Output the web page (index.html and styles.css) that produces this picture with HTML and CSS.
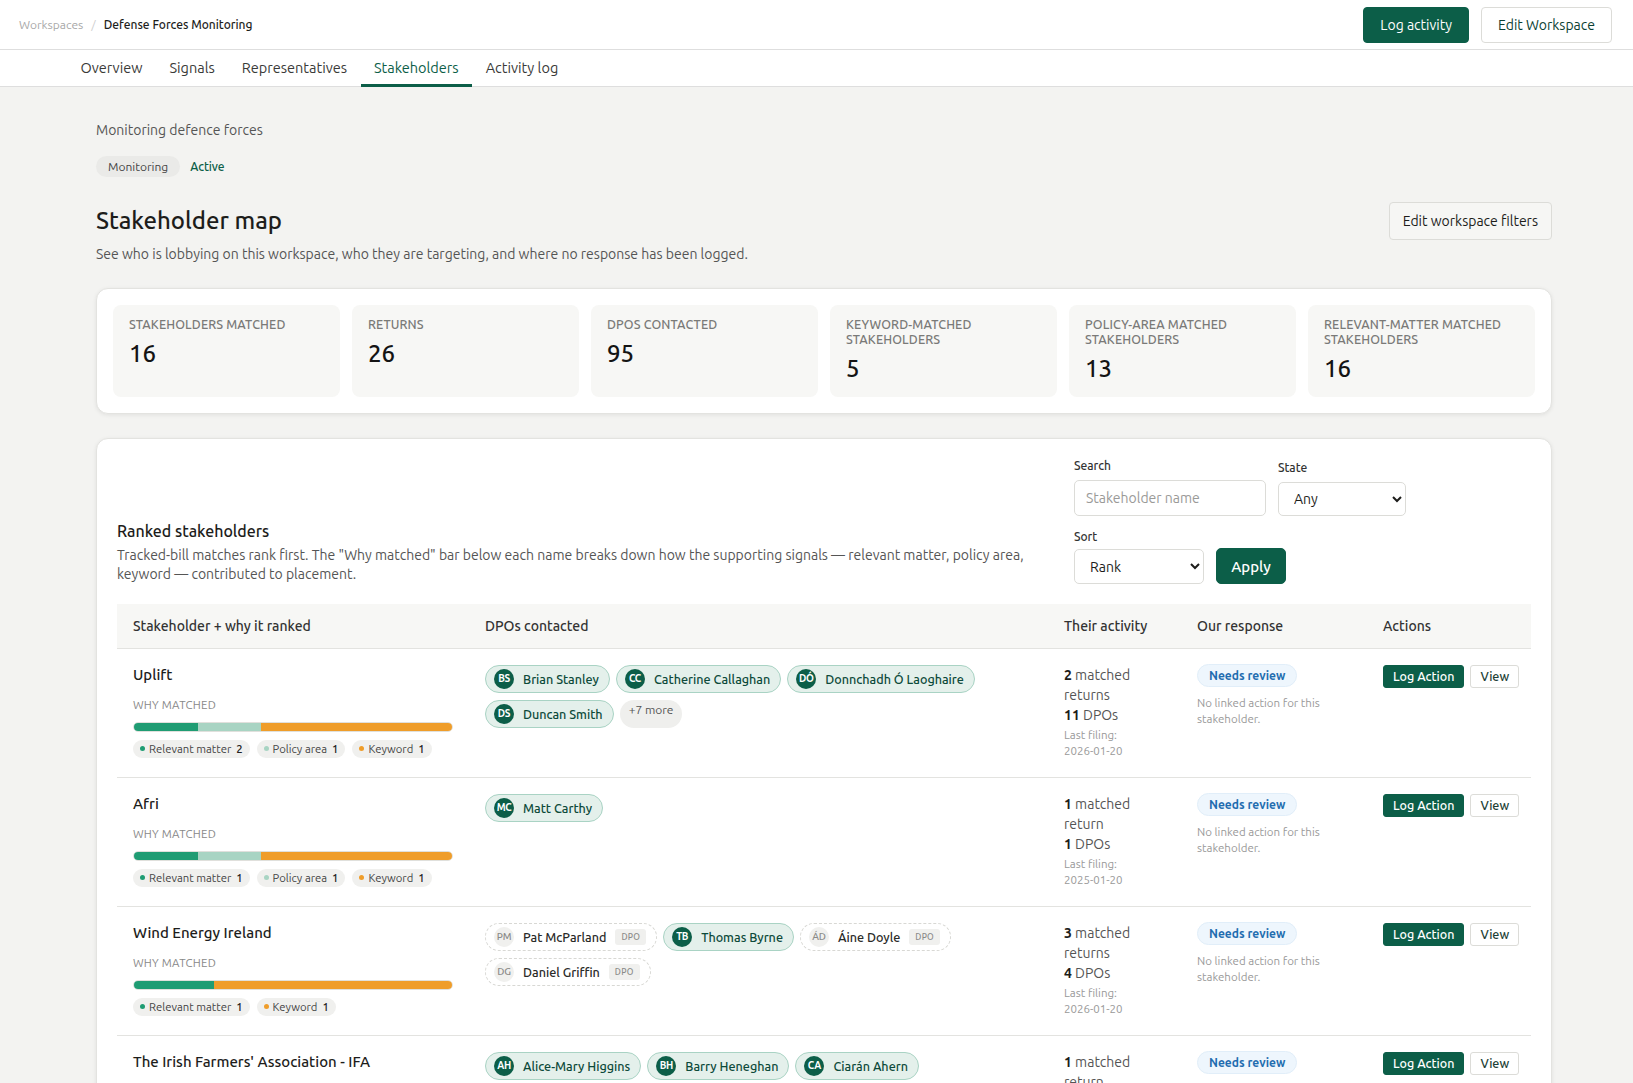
FILE: index.html
```html
<!DOCTYPE html>
<html lang="en">
<head>
    <meta charset="utf-8">
    <title>Defense Forces Monitoring - Stakeholders</title>
    <link rel="stylesheet" href="styles.css">
</head>
<body>
    <header class="topbar">
        <nav class="crumbs">
            <a href="#">Workspaces</a>
            <span class="sep">/</span>
            <span class="current">Defense Forces Monitoring</span>
        </nav>
        <div class="top-actions">
            <button class="btn btn-primary">Log activity</button>
            <button class="btn btn-outline">Edit Workspace</button>
        </div>
    </header>

    <nav class="tabs">
        <a href="#">Overview</a>
        <a href="#">Signals</a>
        <a href="#">Representatives</a>
        <a href="#" class="active">Stakeholders</a>
        <a href="#">Activity log</a>
    </nav>

    <main class="page">
        <p class="ws-desc">Monitoring defence forces</p>
        <div class="ws-tags">
            <span class="tag">Monitoring</span>
            <span class="tag tag-active">Active</span>
        </div>

        <div class="title-row">
            <div>
                <h1>Stakeholder map</h1>
                <p class="lead">See who is lobbying on this workspace, who they are targeting, and where no response has been logged.</p>
            </div>
            <button class="btn btn-light">Edit workspace filters</button>
        </div>

        <section class="card stats">
            <div class="stat"><span class="stat-label">Stakeholders matched</span><span class="stat-value">16</span></div>
            <div class="stat"><span class="stat-label">Returns</span><span class="stat-value">26</span></div>
            <div class="stat"><span class="stat-label">DPOs contacted</span><span class="stat-value">95</span></div>
            <div class="stat"><span class="stat-label">Keyword-matched stakeholders</span><span class="stat-value">5</span></div>
            <div class="stat"><span class="stat-label">Policy-area matched stakeholders</span><span class="stat-value">13</span></div>
            <div class="stat"><span class="stat-label">Relevant-matter matched stakeholders</span><span class="stat-value">16</span></div>
        </section>

        <section class="card ranked">
            <div class="ranked-head">
                <div class="ranked-intro">
                    <h2>Ranked stakeholders</h2>
                    <p>Tracked-bill matches rank first. The "Why matched" bar below each name breaks down how the supporting signals — relevant matter, policy area, keyword — contributed to placement.</p>
                </div>
                <form class="filters">
                    <label class="field field-search">
                        <span>Search</span>
                        <input type="text" placeholder="Stakeholder name">
                    </label>
                    <label class="field field-state">
                        <span>State</span>
                        <select><option>Any</option></select>
                    </label>
                    <label class="field field-sort">
                        <span>Sort</span>
                        <select><option>Rank</option></select>
                    </label>
                    <button type="button" class="btn btn-primary btn-apply">Apply</button>
                </form>
            </div>

            <table class="rank-table">
                <colgroup>
                    <col style="width:352px">
                    <col style="width:579px">
                    <col style="width:133px">
                    <col style="width:186px">
                    <col>
                </colgroup>
                <thead>
                    <tr>
                        <th>Stakeholder + why it ranked</th>
                        <th>DPOs contacted</th>
                        <th>Their activity</th>
                        <th>Our response</th>
                        <th>Actions</th>
                    </tr>
                </thead>
                <tbody>
                    <tr>
                        <td>
                            <div class="sh-name">Uplift</div>
                            <div class="why-label">Why matched</div>
                            <div class="why-bar">
                                <span class="seg seg-rm" style="width:20%"></span>
                                <span class="seg seg-pa" style="width:20%"></span>
                                <span class="seg seg-kw" style="width:60%"></span>
                            </div>
                            <div class="legend">
                                <span class="lg"><i class="dot dot-rm"></i>Relevant matter <b>2</b></span>
                                <span class="lg"><i class="dot dot-pa"></i>Policy area <b>1</b></span>
                                <span class="lg"><i class="dot dot-kw"></i>Keyword <b>1</b></span>
                            </div>
                        </td>
                        <td>
                            <div class="dpos">
                                <span class="dpo"><i class="av">BS</i>Brian Stanley</span>
                                <span class="dpo"><i class="av">CC</i>Catherine Callaghan</span>
                                <span class="dpo"><i class="av">DÓ</i>Donnchadh Ó Laoghaire</span>
                                <span class="dpo"><i class="av">DS</i>Duncan Smith</span>
                                <span class="more">+7 more</span>
                            </div>
                        </td>
                        <td class="activity">
                            <div><b>2</b> matched returns</div>
                            <div><b>11</b> DPOs</div>
                            <div class="last">Last filing: <span>2026-01-20</span></div>
                        </td>
                        <td>
                            <span class="review">Needs review</span>
                            <p class="no-link">No linked action for this stakeholder.</p>
                        </td>
                        <td>
                            <div class="row-actions">
                                <button class="btn btn-primary btn-sm">Log Action</button>
                                <button class="btn btn-outline btn-sm">View</button>
                            </div>
                        </td>
                    </tr>
                    <tr>
                        <td>
                            <div class="sh-name">Afri</div>
                            <div class="why-label">Why matched</div>
                            <div class="why-bar">
                                <span class="seg seg-rm" style="width:20%"></span>
                                <span class="seg seg-pa" style="width:20%"></span>
                                <span class="seg seg-kw" style="width:60%"></span>
                            </div>
                            <div class="legend">
                                <span class="lg"><i class="dot dot-rm"></i>Relevant matter <b>1</b></span>
                                <span class="lg"><i class="dot dot-pa"></i>Policy area <b>1</b></span>
                                <span class="lg"><i class="dot dot-kw"></i>Keyword <b>1</b></span>
                            </div>
                        </td>
                        <td>
                            <div class="dpos">
                                <span class="dpo"><i class="av">MC</i>Matt Carthy</span>
                            </div>
                        </td>
                        <td class="activity">
                            <div><b>1</b> matched return</div>
                            <div><b>1</b> DPOs</div>
                            <div class="last">Last filing: <span>2025-01-20</span></div>
                        </td>
                        <td>
                            <span class="review">Needs review</span>
                            <p class="no-link">No linked action for this stakeholder.</p>
                        </td>
                        <td>
                            <div class="row-actions">
                                <button class="btn btn-primary btn-sm">Log Action</button>
                                <button class="btn btn-outline btn-sm">View</button>
                            </div>
                        </td>
                    </tr>
                    <tr>
                        <td>
                            <div class="sh-name">Wind Energy Ireland</div>
                            <div class="why-label">Why matched</div>
                            <div class="why-bar">
                                <span class="seg seg-rm" style="width:25%"></span>
                                <span class="seg seg-kw" style="width:75%"></span>
                            </div>
                            <div class="legend">
                                <span class="lg"><i class="dot dot-rm"></i>Relevant matter <b>1</b></span>
                                <span class="lg"><i class="dot dot-kw"></i>Keyword <b>1</b></span>
                            </div>
                        </td>
                        <td>
                            <div class="dpos">
                                <span class="dpo dpo-other"><i class="av">PM</i>Pat McParland<em>DPO</em></span>
                                <span class="dpo"><i class="av">TB</i>Thomas Byrne</span>
                                <span class="dpo dpo-other"><i class="av">ÁD</i>Áine Doyle<em>DPO</em></span>
                                <span class="dpo dpo-other"><i class="av">DG</i>Daniel Griffin<em>DPO</em></span>
                            </div>
                        </td>
                        <td class="activity">
                            <div><b>3</b> matched returns</div>
                            <div><b>4</b> DPOs</div>
                            <div class="last">Last filing: <span>2026-01-20</span></div>
                        </td>
                        <td>
                            <span class="review">Needs review</span>
                            <p class="no-link">No linked action for this stakeholder.</p>
                        </td>
                        <td>
                            <div class="row-actions">
                                <button class="btn btn-primary btn-sm">Log Action</button>
                                <button class="btn btn-outline btn-sm">View</button>
                            </div>
                        </td>
                    </tr>
                    <tr>
                        <td>
                            <div class="sh-name">The Irish Farmers' Association - IFA</div>
                            <div class="why-label">Why matched</div>
                            <div class="why-bar">
                                <span class="seg seg-rm" style="width:25%"></span>
                                <span class="seg seg-kw" style="width:75%"></span>
                            </div>
                            <div class="legend">
                                <span class="lg"><i class="dot dot-rm"></i>Relevant matter <b>1</b></span>
                                <span class="lg"><i class="dot dot-kw"></i>Keyword <b>1</b></span>
                            </div>
                        </td>
                        <td>
                            <div class="dpos">
                                <span class="dpo"><i class="av">AH</i>Alice-Mary Higgins</span>
                                <span class="dpo"><i class="av">BH</i>Barry Heneghan</span>
                                <span class="dpo"><i class="av">CA</i>Ciarán Ahern</span>
                            </div>
                        </td>
                        <td class="activity">
                            <div><b>1</b> matched return</div>
                            <div><b>3</b> DPOs</div>
                            <div class="last">Last filing: <span>2026-01-20</span></div>
                        </td>
                        <td>
                            <span class="review">Needs review</span>
                            <p class="no-link">No linked action for this stakeholder.</p>
                        </td>
                        <td>
                            <div class="row-actions">
                                <button class="btn btn-primary btn-sm">Log Action</button>
                                <button class="btn btn-outline btn-sm">View</button>
                            </div>
                        </td>
                    </tr>
                </tbody>
            </table>
        </section>
    </main>
</body>
</html>
```

FILE: styles.css
```css
* {
    box-sizing: border-box;
}
body {
    margin: 0;
    font-family: "Ubuntu", "Lato", "Noto Sans", sans-serif;
    font-size: 14px;
    color: #1d1d1b;
    background: #f3f3f1;
}
button, input, select {
    font-family: inherit;
}
a {
    color: inherit;
    text-decoration: none;
}

/* top bar */
.topbar {
    height: 50px;
    display: flex;
    align-items: center;
    justify-content: space-between;
    padding: 0 21px 0 19px;
    background: #fff;
    border-bottom: 1px solid #dedede;
}
.crumbs {
    display: flex;
    align-items: center;
    gap: 8px;
    font-size: 12px;
}
.crumbs a {
    color: #a8a8a8;
}
.crumbs .sep {
    color: #cfcfcf;
}
.crumbs .current {
    color: #1d1d1b;
    font-weight: 500;
}
.top-actions {
    display: flex;
    gap: 12px;
}

.btn {
    border-radius: 4px;
    font-size: 14px;
    cursor: pointer;
    height: 36px;
    padding: 0 16px;
    white-space: nowrap;
}
.btn-primary {
    background: #0c5e48;
    border: 1px solid #0c5e48;
    color: #fff;
}
.btn-outline {
    background: #fff;
    border: 1px solid #dcdcd8;
    color: #0c3f33;
}
.btn-light {
    background: #f6f6f4;
    border: 1px solid #dcdcd8;
    color: #1d1d1b;
    height: 38px;
    padding: 0 13px;
}
.btn-sm {
    height: 23px;
    padding: 0 9px;
    font-size: 12.5px;
    font-weight: 500;
    border-radius: 3px;
    flex-shrink: 0;
}

/* tabs */
.tabs {
    display: flex;
    padding-left: 67px;
    background: #fff;
    border-bottom: 1px solid #dedede;
    height: 37px;
}
.tabs a {
    padding: 0 13.5px;
    display: flex;
    align-items: center;
    font-size: 14.5px;
    color: #3a3a38;
    border-bottom: 3px solid transparent;
    margin-bottom: -1px;
}
.tabs a.active {
    color: #0c5e48;
    border-bottom-color: #0c5e48;
}

/* page */
.page {
    padding: 35px 81px 40px 96px;
}
.ws-desc {
    margin: 0;
    font-size: 14px;
    color: #555;
}
.ws-tags {
    display: flex;
    gap: 6px;
    margin-top: 18px;
    align-items: center;
}
.tag {
    font-size: 12px;
    padding: 4px 12px;
    border-radius: 999px;
    background: #eaeae8;
    color: #444;
}
.tag-active {
    background: transparent;
    color: #0c5e48;
    font-weight: 500;
    padding-left: 4px;
}
.title-row {
    display: flex;
    justify-content: space-between;
    align-items: flex-start;
    margin-top: 30px;
}
h1 {
    margin: 0;
    font-size: 24px;
    font-weight: 500;
    color: #1d1d1b;
}
.lead {
    margin: 12px 0 0;
    color: #555;
    font-size: 14px;
}
.title-row .btn-light {
    margin-top: -5px;
}

.card {
    background: #fff;
    border: 1px solid #e3e3e0;
    border-radius: 12px;
    box-shadow: 0 1px 4px rgba(0, 0, 0, 0.08);
}

/* stats */
.stats {
    margin-top: 26px;
    padding: 16px;
    display: grid;
    grid-template-columns: repeat(6, 1fr);
    gap: 12px;
}
.stat {
    background: #f7f7f5;
    border-radius: 8px;
    padding: 12px 16px 13px;
    display: flex;
    flex-direction: column;
    gap: 7px;
}
.stat-label {
    font-size: 12.5px;
    line-height: 15px;
    color: #7a7a78;
    text-transform: uppercase;
    font-weight: 500;
    letter-spacing: 0.01em;
}
.stat-value {
    font-size: 24px;
    line-height: 30px;
    font-weight: 500;
    color: #141414;
}

/* ranked list */
.ranked {
    margin-top: 24px;
    padding: 20px 20px 0;
}
.ranked-head {
    display: flex;
    align-items: flex-end;
    gap: 40px;
}
.ranked-intro {
    flex: 1;
}
.ranked-intro h2 {
    margin: 0;
    font-size: 16px;
    font-weight: 500;
}
.ranked-intro p {
    margin: 6px 0 0;
    color: #555;
    font-size: 14px;
    line-height: 19px;
}
.filters {
    width: 457px;
    display: flex;
    flex-wrap: wrap;
    align-items: flex-end;
    column-gap: 12px;
    row-gap: 14px;
}
.field {
    display: flex;
    flex-direction: column;
    gap: 8px;
}
.field-sort {
    gap: 6px;
}
.field span {
    font-size: 12px;
    font-weight: 500;
    color: #333;
}
.field input, .field select {
    border: 1px solid #dcdcd8;
    border-radius: 5px;
    background: #fff;
    font-size: 14px;
    color: #1d1d1b;
    padding: 0 11px;
}
.field input {
    width: 192px;
    height: 36px;
}
.field input::placeholder {
    color: #9a9a98;
}
.field-state select {
    width: 128px;
    height: 34px;
}
.field-sort select {
    width: 130px;
    height: 35px;
}
.btn-apply {
    height: 36px;
    width: 70px;
    padding: 0;
    font-weight: 500;
    font-size: 15px;
    border-radius: 5px;
}

.rank-table {
    width: 100%;
    margin-top: 20px;
    border-collapse: collapse;
    table-layout: fixed;
}
.rank-table th {
    background: #f7f7f5;
    text-align: left;
    font-weight: 500;
    font-size: 14px;
    color: #333;
    height: 44px;
    padding: 0 16px;
    border-bottom: 1px solid #e3e3e0;
}
.rank-table td {
    vertical-align: top;
    padding: 16px 16px 16px;
    border-bottom: 1px solid #e3e3e0;
    height: 129px;
}
.sh-name {
    font-size: 15px;
    font-weight: 500;
    color: #1d1d1b;
    line-height: 20px;
}
.why-label {
    margin-top: 13px;
    font-size: 11.5px;
    line-height: 14px;
    color: #888;
    text-transform: uppercase;
    letter-spacing: 0.02em;
}
.why-bar {
    margin-top: 10px;
    display: flex;
    height: 10px;
    border-radius: 999px;
    overflow: hidden;
    border: 1px solid #e0e0dc;
    width: 320px;
}
.seg-rm { background: #1f9c73; }
.seg-pa { background: #a8d4c3; }
.seg-kw { background: #ef9d2a; }
.legend {
    display: flex;
    gap: 7px;
    margin-top: 8px;
}
.lg {
    display: inline-flex;
    align-items: center;
    gap: 4px;
    background: #f0f0ee;
    border-radius: 999px;
    padding: 0 7px;
    height: 18px;
    font-size: 11.3px;
    color: #444;
    white-space: nowrap;
    flex-shrink: 0;
}
.lg b {
    font-weight: 500;
    color: #222;
    margin-left: 1px;
}
.dot {
    width: 5px;
    height: 5px;
    border-radius: 50%;
    display: inline-block;
}
.dot-rm { background: #1f9c73; }
.dot-pa { background: #a8d4c3; }
.dot-kw { background: #ef9d2a; }

.dpos {
    display: flex;
    flex-wrap: wrap;
    gap: 7px 6px;
}
.dpo {
    display: inline-flex;
    align-items: center;
    gap: 9px;
    height: 28px;
    padding: 0 10px 0 8px;
    border-radius: 999px;
    background: #e4f0eb;
    border: 1px solid #a9d3c4;
    font-size: 12.6px;
    font-weight: 500;
    color: #0d4a3a;
}
.av {
    width: 20px;
    height: 20px;
    border-radius: 50%;
    background: #0c5e48;
    color: #fff;
    font-style: normal;
    font-size: 10px;
    font-weight: 700;
    display: inline-flex;
    align-items: center;
    justify-content: center;
    letter-spacing: -0.03em;
}
.dpo-other {
    background: #fff;
    border: 1px dashed #d8d8d4;
    color: #2a2a28;
}
.dpo-other .av {
    background: #f0f0ee;
    color: #8a8a88;
    font-weight: 500;
}
.dpo em {
    font-style: normal;
    font-size: 8.5px;
    color: #8a8a88;
    background: #f0f0ee;
    padding: 3px 6px;
    border-radius: 3px;
    letter-spacing: 0.03em;
}
.more {
    display: inline-flex;
    align-items: flex-start;
    height: 28px;
    padding: 3px 9px 0;
    border-radius: 999px;
    background: #efefed;
    font-size: 12px;
    color: #555;
}

.activity {
    font-size: 14px;
    color: #555;
    line-height: 20px;
}
.activity b {
    color: #1d1d1b;
    font-weight: 600;
}
.activity .last {
    font-size: 11.5px;
    color: #999;
    line-height: 16px;
    margin-top: 2px;
}
.activity .last span {
    display: block;
}
.review {
    display: inline-block;
    padding: 4px 11px;
    border-radius: 999px;
    background: #eef6fd;
    border: 1px solid #e1eef9;
    color: #1f6db0;
    font-size: 12px;
    font-weight: 600;
    margin-top: -1px;
}
.no-link {
    margin: 8px 0 0;
    font-size: 11.5px;
    color: #999;
    line-height: 16px;
}
.row-actions {
    display: flex;
    gap: 6px;
}
.row-actions .btn-outline {
    color: #1d3f36;
}
```
